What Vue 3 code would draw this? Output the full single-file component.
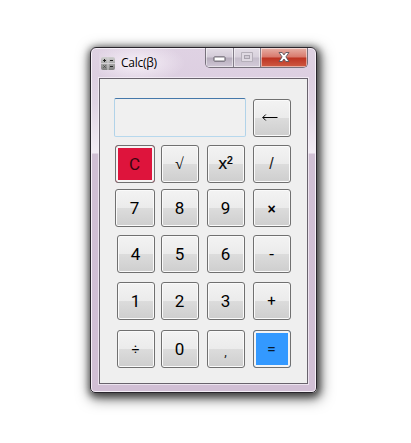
<script setup>
const rows = [
  { id: 'functions', wide: true, keys: [
    { label: 'C', kind: 'clear' }, { label: '√', kind: 'root' }, { label: 'x²', kind: 'power' }, { label: '/', kind: 'slash' },
  ] },
  { id: 'seven', wide: true, keys: [
    { label: '7' }, { label: '8' }, { label: '9' }, { label: '×', kind: 'times' },
  ] },
  { id: 'four', keys: [{ label: '4' }, { label: '5' }, { label: '6' }, { label: '-', kind: 'minus' }] },
  { id: 'one', keys: [{ label: '1' }, { label: '2' }, { label: '3' }, { label: '+', kind: 'plus' }] },
  { id: 'zero', keys: [
    { label: '÷', kind: 'divide' }, { label: '0' }, { label: ',', kind: 'comma' }, { label: '=', kind: 'equals' },
  ] },
]
</script>

<template>
  <main class="desktop">
    <section class="window">
      <header class="titlebar">
        <svg class="app-icon" width="14" height="13" viewBox="0 0 14 13">
          <defs>
            <linearGradient id="tile" x1="0" y1="0" x2="0" y2="1">
              <stop offset="0" stop-color="#d0d0d0" />
              <stop offset="1" stop-color="#808080" />
            </linearGradient>
          </defs>
          <rect width="14" height="13" rx="2" fill="url(#tile)" />
          <path d="M7 0V13M0 6.5H14" stroke="#d3d0d4" stroke-width="1" />
          <path d="M2 3.5H5M3.5 2V5M9 3.5H12M9 9.5H12" stroke="#222" stroke-width="1" fill="none" />
          <path d="M2.3 8.3L4.8 10.8M4.8 8.3L2.3 10.8" stroke="#444" stroke-width=".8" />
        </svg>
        <span class="title">Calc(β)</span>
        <div class="controls">
          <button class="control minimize" aria-label="Minimize">
            <svg width="13" height="6" viewBox="0 0 13 6"><rect x="1" y=".9" width="11" height="4.2" rx=".6" fill="#fff" stroke="#5c5862" /></svg>
          </button>
          <button class="control maximize" aria-label="Maximize">
            <svg width="12" height="10" viewBox="0 0 12 10"><path d="M.5.5H11.5V9.5H.5Z" fill="#dfd9e2" stroke="#b5afb9" /><rect x="3.5" y="3.5" width="5" height="3" fill="#d0cad4" stroke="#a9a3ae" /></svg>
          </button>
          <button class="control close" aria-label="Close">
            <svg width="12" height="10" viewBox="0 0 12 10"><path d="M1 .5H4.2L6 2.9 7.8.5H11L7.9 4.9 11 9.5H7.8L6 7 4.2 9.5H1L4.1 4.9Z" fill="#fff" stroke="#59535c" stroke-width=".9" /></svg>
          </button>
        </div>
      </header>
      <div class="client">
        <div class="top-row">
          <div class="display"></div>
          <button class="key backspace" aria-label="Backspace">
            <svg width="16" height="7" viewBox="0 0 16 7"><path d="M.8 3.5H15.5M3.8 .5L.8 3.5L3.8 6.5" fill="none" stroke="#000" stroke-width="1" /></svg>
          </button>
        </div>
        <div v-for="row in rows" :key="row.id" class="row" :class="[row.id, { wide: row.wide }]">
          <button v-for="key in row.keys" :key="key.label" class="key" :class="key.kind"><span>{{ key.label }}</span></button>
        </div>
      </div>
    </section>
  </main>
</template>

<style>
body { margin: 0; background: #fff; }
</style>

<style scoped>
* { box-sizing: border-box; }
.desktop {
  width: 411px;
  height: 443px;
  padding: 47px 0 0 90px;
  overflow: hidden;
  background: #fff;
}
.window {
  width: 227px;
  height: 346px;
  padding: 0 8px 8px;
  border: 1px solid #29252c;
  border-radius: 6px 6px 5px 5px;
  background: linear-gradient(#dfd2e3 0, #ddcfe1 28px, #e0d4e4 55px, #f2ecf4 105px, #d0bfd4 106px, #d1bfd5 100%);
  box-shadow: inset 0 0 0 1px #f5eff7, 1px 2px 7px 2px rgba(0, 0, 0, .55), 2px 4px 14px 2px rgba(0, 0, 0, .5);
}
.titlebar {
  display: flex;
  height: 30px;
  padding-left: 2px;
  background: radial-gradient(ellipse 48px 20px at 38px 15px, rgba(250, 245, 251, .85), transparent);
}
.app-icon { flex: none; margin-top: 9px; }
.title {
  flex: 1;
  padding: 7px 0 0 6px;
  color: #000;
  font: 12px/16px "Open Sans", "Noto Sans", sans-serif;
  letter-spacing: -.25px;
}
.controls {
  display: flex;
  width: 103px;
  height: 20px;
  overflow: hidden;
  border: 1px solid #77717c;
  border-top: 0;
  border-radius: 0 0 5px 5px;
}
.control {
  display: flex;
  align-items: center;
  justify-content: center;
  padding: 0;
  border: 0;
  background: linear-gradient(#e3dde6 0, #d3cbd8 9px, #b6adbc 10px, #cfc6d5 19px);
  box-shadow: inset 0 0 0 1px rgba(255, 255, 255, .5);
}
.minimize { width: 28px; padding-top: 3px; border-right: 1px solid #827c88; }
.maximize { width: 27px; padding-bottom: 1px; border-right: 1px solid #827c88; background: linear-gradient(#e3dde6 0, #d8d1dc 9px, #c5bdcb 10px, #d3cad8 19px); }
.close { width: 46px; padding-bottom: 1px; background: linear-gradient(#e7b0a7 0, #d8796c 9px, #bd3322 10px, #cf5b43 19px); }
.client {
  width: 209px;
  height: 306px;
  padding: 19px 16px 0 14px;
  border: 1px solid #69636d;
  background: #efefef;
  box-shadow: 0 0 0 1px rgba(248, 242, 250, .7);
}
.top-row {
  display: flex;
  align-items: flex-end;
  justify-content: space-between;
  height: 39px;
}
.display {
  width: 132px;
  height: 39px;
  border: 1px solid;
  border-color: #4578aa #b1d3e9 #b7d8ed #b1d3e9;
  border-radius: 2px;
  background: #f0f0f0;
}
.row {
  display: grid;
  grid-template-columns: 38px 38px 38px 38px;
  column-gap: 8px;
  justify-content: end;
  margin-top: 8px;
}
.row .key:first-child { margin-right: -2px; margin-left: 2px; }
.wide .key:first-child { margin-left: 0; }
.seven { margin-top: 6px; }
.one { margin-top: 9px; }
.zero { margin-top: 10px; }
.key {
  display: flex;
  align-items: center;
  justify-content: center;
  min-width: 38px;
  height: 38px;
  padding: 0 1px 0 0;
  border: 1px solid #707070;
  border-radius: 3px;
  color: #000;
  background: linear-gradient(#f3f3f3 0, #ebebeb 50%, #dcdcdc 50%, #cecece 100%);
  box-shadow: inset 0 0 0 1px #fafafa;
  font: 17px/20px Roboto, "Liberation Sans", sans-serif;
}
.key.clear, .key.equals {
  box-shadow: inset 0 0 0 2px #f4f4f4;
}
.key.backspace { padding: 0 4px 1px 0; }
.key.clear { color: #38040f; background: #de143c; }
.key.equals { padding-top: 1px; color: #0a1c30; background: #3399ff; font-size: 16px; }
.key.power { font-family: "Liberation Sans", sans-serif; font-size: 17px; -webkit-text-stroke: .2px #000; }
.key.times { padding-top: 1px; font-family: "Liberation Sans", sans-serif; font-size: 14px; font-weight: bold; }
.key.root { font-family: "Liberation Serif", serif; font-size: 16px; }
.key.slash { font-family: "Liberation Sans", sans-serif; font-size: 16px; color: #222; }
.key.plus { font-size: 15px; }
.key.divide { font-size: 14px; }
.key.comma { padding-top: 5px; font-size: 13px; color: #222; }
</style>
